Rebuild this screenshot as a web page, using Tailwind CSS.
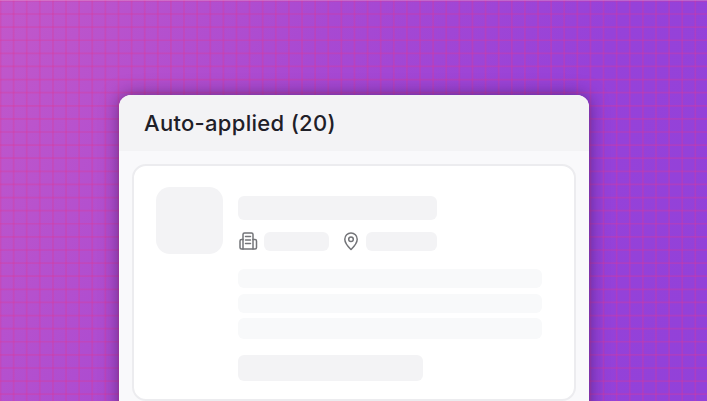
<!DOCTYPE html>
<html lang="en">
<head>
  <meta charset="UTF-8">
  <meta name="viewport" content="width=device-width, initial-scale=1.0">
  <title>Auto-applied</title>
  <script src="https://cdn.jsdelivr.net/npm/@tailwindcss/browser@4"></script>
</head>
<body class="font-['Inter',sans-serif]">
  <!-- Background with grid -->
  <div class="relative h-[401px] w-[707px] overflow-hidden bg-[linear-gradient(115deg,#c258ca_0%,#a849d2_38%,#9642d9_70%,#9241d9_100%)]">
    <svg class="absolute inset-0 w-full h-full" viewBox="0 0 707 401" fill="none" stroke="#e13791" stroke-opacity="0.3" stroke-width="1.7">
      <path id="grid-v"/>
      <path id="grid-h"/>
    </svg>
    <div class="absolute inset-x-0 top-0 h-px bg-white/20"></div>

    <div class="relative pt-[95px] pl-[119px]">
      <!-- Panel -->
      <div class="w-[470px] h-[330px] rounded-t-[12px] bg-[#f9f9fb] overflow-hidden shadow-[0_0_18px_rgba(40,15,70,0.55)]">
        <header class="h-14 bg-[#f3f3f5] pl-[25px] flex items-center">
          <h1 class="text-[22px] font-[550] text-[#1f2028] tracking-[0.3px]">Auto-applied (20)</h1>
        </header>

        <!-- Job card skeleton -->
        <div class="mt-[13px] ml-[13px] w-[444px] h-[237px] rounded-[14px] border-2 border-[#ececef] bg-white flex gap-[15px] pl-[22px] pt-[21px]">
          <div class="w-[67px] h-[67px] rounded-[14px] bg-[#f3f3f5] shrink-0"></div>
          <div class="pt-[9px]">
            <div class="w-[199px] h-6 rounded-md bg-[#f3f3f5]"></div>
            <div class="mt-[12px] flex items-center h-[19px]">
              <svg class="w-[20px] h-[20px] text-[#737478]" viewBox="0 1 20 20" fill="none" stroke="currentColor" stroke-width="1.500" stroke-linejoin="round" stroke-linecap="round">
                <path d="M5 18V3.500a1.500 1.500 0 0 1 1.500-1.500h7a1.500 1.500 0 0 1 1.500 1.500V18"/>
                <path d="M5 8.500H3.500A1.500 1.500 0 0 0 2 10V16.500A1.500 1.500 0 0 0 3.500 18H17A1.500 1.500 0 0 0 18.500 16.500V10A1.500 1.500 0 0 0 17 8.500H15"/>
                <path d="M7.500 5.500h5M7.500 9h5M7.500 12.500h5"/>
              </svg>
              <div class="ml-[6px] w-[65px] h-[19px] rounded-md bg-[#f3f3f5]"></div>
              <svg class="ml-[12px] w-[20px] h-[20px] text-[#737478]" viewBox="0 1 20 20" fill="none" stroke="currentColor" stroke-width="1.500" stroke-linejoin="round">
                <path d="M10 18.500C7.500 16 3.800 12.500 3.800 8.200a6.200 6.200 0 0 1 12.400 0C16.200 12.500 12.500 16 10 18.500Z"/>
                <circle cx="10" cy="8.200" r="2.300"/>
              </svg>
              <div class="ml-[5px] w-[71px] h-[19px] rounded-md bg-[#f3f3f5]"></div>
            </div>
            <div class="mt-[18px] w-[304px] h-[19px] rounded-md bg-[#f8f9fa]"></div>
            <div class="mt-[6px] w-[304px] h-[19px] rounded-md bg-[#f8f9fa]"></div>
            <div class="mt-[5px] w-[304px] h-[21px] rounded-md bg-[#f8f9fa]"></div>
            <div class="mt-[16px] w-[185px] h-[26px] rounded-md bg-[#f3f3f5]"></div>
          </div>
        </div>
      </div>
    </div>
  </div>

  <script>
    // Grid lines sit on a 13.11px pitch
    const pitch = 13.11;
    let v = '', h = '';
    for (let i = 0; i < 55; i++) v += `M${0.5 + i * pitch} 0V401`;
    for (let i = 0; i < 31; i++) h += `M0 ${0.9 + i * pitch}H707`;
    document.getElementById('grid-v').setAttribute('d', v);
    document.getElementById('grid-h').setAttribute('d', h);
  </script>
</body>
</html>
